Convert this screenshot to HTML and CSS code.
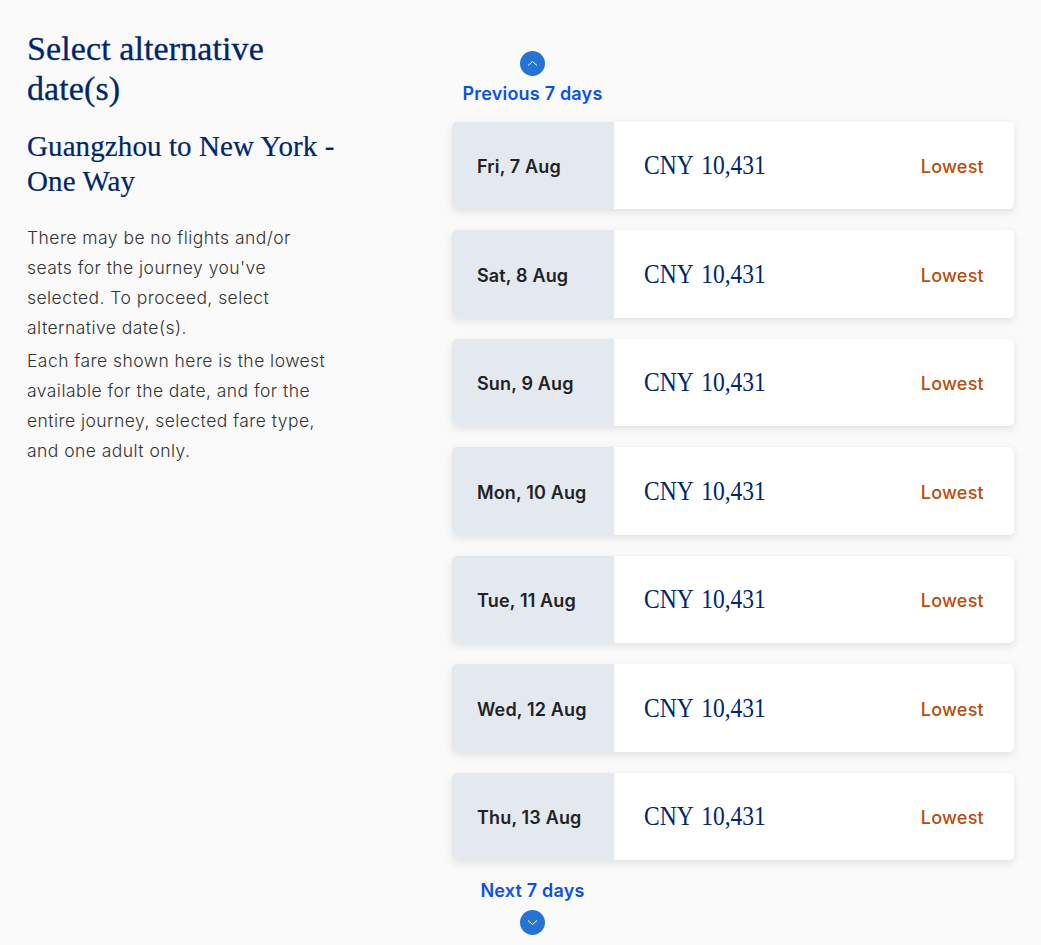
FILE: index.html
```html
<!DOCTYPE html>
<html lang="en">
<head>
<meta charset="utf-8">
<title>Select alternative dates</title>
<link rel="stylesheet" href="styles.css">
</head>
<body>
<main class="page">
  <section class="intro">
    <h1 class="title">Select alternative date(s)</h1>
    <h2 class="route">Guangzhou to New York - One Way</h2>
    <p class="copy">There may be no flights and/or seats for the journey you've selected. To proceed, select alternative date(s).</p>
    <p class="copy">Each fare shown here is the lowest available for the date, and for the entire journey, selected fare type, and one adult only.</p>
  </section>
  <section class="dates">
    <a class="pager pager-prev" href="#">
      <span class="pager-icon"><svg viewBox="0 0 25 25" width="25" height="25"><path d="M8 14.5l4.5-4 4.5 4" fill="none" stroke="#fff" stroke-width="1"/></svg></span>
      <span class="pager-label">Previous 7 days</span>
    </a>
    <ul class="list">
      <li class="card"><span class="date">Fri, 7 Aug</span><span class="fare"><span class="price">CNY 10,431</span><span class="tag">Lowest</span></span></li>
      <li class="card"><span class="date">Sat, 8 Aug</span><span class="fare"><span class="price">CNY 10,431</span><span class="tag">Lowest</span></span></li>
      <li class="card"><span class="date">Sun, 9 Aug</span><span class="fare"><span class="price">CNY 10,431</span><span class="tag">Lowest</span></span></li>
      <li class="card"><span class="date">Mon, 10 Aug</span><span class="fare"><span class="price">CNY 10,431</span><span class="tag">Lowest</span></span></li>
      <li class="card"><span class="date">Tue, 11 Aug</span><span class="fare"><span class="price">CNY 10,431</span><span class="tag">Lowest</span></span></li>
      <li class="card"><span class="date">Wed, 12 Aug</span><span class="fare"><span class="price">CNY 10,431</span><span class="tag">Lowest</span></span></li>
      <li class="card"><span class="date">Thu, 13 Aug</span><span class="fare"><span class="price">CNY 10,431</span><span class="tag">Lowest</span></span></li>
    </ul>
    <a class="pager pager-next" href="#">
      <span class="pager-label">Next 7 days</span>
      <span class="pager-icon"><svg viewBox="0 0 25 25" width="25" height="25"><path d="M8 10.5l4.5 4 4.5-4" fill="none" stroke="#fff" stroke-width="1"/></svg></span>
    </a>
  </section>
</main>
</body>
</html>
```
FILE: styles.css
```css
* { box-sizing: border-box; }
html, body { margin: 0; padding: 0; }
body {
  background: #fafafa;
  height: 945px;
  overflow: hidden;
  font-family: "Inter", "Liberation Sans", sans-serif;
}
.page {
  display: flex;
  align-items: flex-start;
  padding: 29px 27px 0;
}
.intro { width: 310px; flex: none; margin-right: 115px; }
.title {
  margin: 0 0 20px;
  font: 400 34px/40px "Liberation Serif", serif;
  letter-spacing: .1px;
  color: #00266b;
  -webkit-text-stroke: .3px #00266b;
}
.route {
  margin: 0 0 24px;
  font: 400 29px/35px "Liberation Serif", serif;
  letter-spacing: .1px;
  color: #00266b;
  -webkit-text-stroke: .2px #00266b;
}
.copy {
  max-width: 300px;
  margin: 0 0 3px;
  font-size: 17.5px;
  font-weight: 300;
  letter-spacing: .45px;
  line-height: 30px;
  color: #333;
}
.dates { width: 562px; flex: none; padding-top: 22px; }
.pager {
  display: flex;
  flex-direction: column;
  align-items: center;
  width: 161px;
  text-decoration: none;
  color: #0d50e8;
  font-size: 18px;
  font-weight: 600;
  letter-spacing: .2px;
  line-height: 24px;
}
.pager-icon {
  display: flex;
  width: 25px;
  height: 25px;
  border-radius: 50%;
  background: #2574d4;
}
.pager-prev { gap: 6px; margin-bottom: 15.75px; }
.pager-next { gap: 7px; margin-top: 18.25px; }
.list {
  list-style: none;
  margin: 0;
  padding: 0;
  display: flex;
  flex-direction: column;
  gap: 21px;
}
.card {
  display: flex;
  height: 87.5px;
  border-radius: 5px;
  overflow: hidden;
  background: #fff;
  box-shadow: 0 3px 8px rgba(0, 0, 0, .1);
}
.date {
  width: 162px;
  flex: none;
  display: flex;
  align-items: center;
  padding-left: 25px;
  padding-top: 2px;
  background: #e4e9f0;
  color: #222;
  font-size: 18px;
  font-weight: 600;
  letter-spacing: .15px;
}
.fare {
  flex: 1;
  display: flex;
  align-items: center;
  justify-content: space-between;
  padding: 0 30px;
}
.price {
  display: inline-block;
  width: 121px;
  margin-bottom: 1px;
  white-space: nowrap;
  font: 400 28px/1 "Liberation Serif", serif;
  word-spacing: 3px;
  color: #00266b;
  transform: scaleX(.84);
  transform-origin: left center;
}
.tag {
  margin-top: 2px;
  color: #b84d0c;
  font-size: 18px;
  font-weight: 500;
  letter-spacing: .25px;
}
```
